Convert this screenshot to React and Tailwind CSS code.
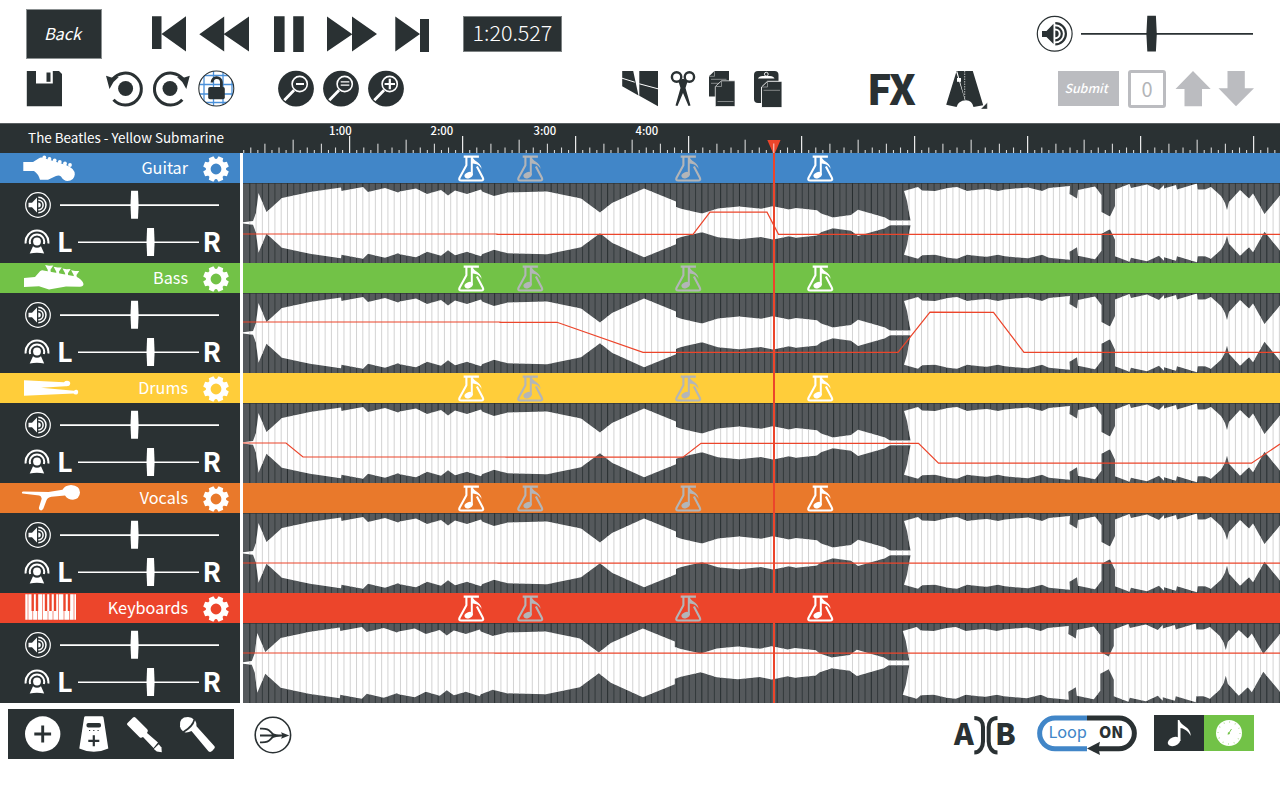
import React from "react";

const INK = "#2a3133";
const RED = "#ec452b";

const FONT = "font-['Noto_Sans_CJK_SC','Noto_Sans',sans-serif]";

function Icon({ box, className = "", children }) {
  const [x, y, w, h] = box;
  return (
    <svg className={`block shrink-0 ${className}`} width={w} height={h} viewBox={`${x} ${y} ${w} ${h}`} fill={INK}>
      {children}
    </svg>
  );
}

/* ---------- top bar ---------- */

function ZoomIcon({ className, kind }) {
  return (
    <Icon box={[278, 70, 36, 37]} className={className}>
      <circle cx="296" cy="88.6" r="17.9" />
      <path d="M284.3 100.3L294 90.2" stroke="#fff" strokeWidth="2.8" fill="none" />
      <circle cx="299.7" cy="84" r="7.6" fill={INK} stroke="#fff" strokeWidth="1.6" />
      {kind === "out" && <path d="M296 84h8" stroke="#fff" strokeWidth="2" />}
      {kind === "fit" && <path d="M295.7 81.8h8.6M295.7 85.2h8.6" stroke="#fff" strokeWidth="1.2" />}
      {kind === "in" && <path d="M294.6 84h10.4M299.8 78.8v10.4" stroke="#fff" strokeWidth="2.2" />}
    </Icon>
  );
}

function TopBar() {
  return (
    <header className="h-[123px] pt-[9px]">
      <div className="flex h-[50px] items-center pl-[26px]">
        <button className="h-[50px] w-[76px] border border-[#8b9091] bg-[#2a3133] pr-[3px] pb-[2px] text-[16.3px] leading-none text-white italic">Back</button>
        <Icon box={[152, 16, 35, 36]} className="ml-[50px]">
          <path d="M152 16.3h9.5v32.6H152zM161.5 34L186 16.3v35.2z" />
        </Icon>
        <Icon box={[199, 16, 51, 36]} className="ml-[12px]">
          <path d="M199.3 34.3L224.2 16.5v17.2L249 16.5v35L224.2 34.6v17z" />
        </Icon>
        <Icon box={[274, 16, 31, 36]} className="ml-[24px]">
          <path d="M274 16.3h10.6V52H274zM293.2 16.3h10.6V52h-10.6z" />
        </Icon>
        <Icon box={[327, 16, 51, 36]} className="ml-[22px]">
          <path d="M327 16.5L352 34V16.5L377 34 352 51.5V34.4L327 51.5z" />
        </Icon>
        <Icon box={[395, 16, 35, 36]} className="ml-[17px]">
          <path d="M395.3 16.5L420 34l-24.7 17.5zM420 19h9v33h-9z" />
        </Icon>
        <div className="ml-[33px] flex h-[36px] w-[99px] items-center justify-center border border-[#7d8283] bg-[#2a3133] pb-[4px] text-[21.5px] leading-none font-light text-white">
          <span>1:20.527</span>
        </div>
        <Icon box={[1036, 15, 38, 38]} className="ml-[474px]">
          <circle cx="1054.7" cy="33.8" r="17.4" fill="#fff" stroke={INK} strokeWidth="1.2" />
          <path d="M1042 31h4.5l7-7.3v20.3l-7-7h-4.5z" />
          <path d="M1055.3 30.4a3.4 3.4 0 0 1 0 6.8z" />
          <path d="M1055.3 27.3a6.5 6.5 0 0 1 0 13M1055.3 23.2a10.6 10.6 0 0 1 0 21.2" fill="none" stroke={INK} strokeWidth="2.2" />
        </Icon>
        <Icon box={[1081, 15, 173, 38]} className="ml-[7px]">
          <path d="M1081 32.9h172v1.9h-172z" />
          <path d="M1147.3 15.8h8.6q1.800 18 0 35.8h-8.600q-1.800-17.800 0-35.800z" />
        </Icon>
      </div>

      <div className="mt-[11px] flex h-[40px] items-start pl-[26px]">
        <Icon box={[26, 70, 37, 38]}>
          <path d="M26.800 71h32.200l3 3v32.300H26.800z" />
          <path d="M36 70.500h16.800v13H36z" fill="#fff" />
          <path d="M46.500 72.500h4v9.300h-4z" />
        </Icon>
        <Icon box={[105, 70, 39, 38]} className="ml-[42px]">
          <circle cx="125.600" cy="88.500" r="7.500" />
          <path d="M112.500 79.500A16 16 0 1 1 113.500 99.800" fill="none" stroke={INK} strokeWidth="3" />
          <path d="M106 75.800l5.500 1.800 7.300-.600-5.300 5-4 7z" />
        </Icon>
        <Icon box={[152, 70, 39, 38]} className="ml-[8px]">
          <circle cx="170" cy="88.500" r="7.500" />
          <path d="M183.300 79.500A16 16 0 1 0 182.300 99.800" fill="none" stroke={INK} strokeWidth="3" />
          <path d="M189.800 75.800l-5.500 1.800-7.300-.600 5.300 5 4 7z" />
        </Icon>
        <Icon box={[198, 70, 37, 38]} className="ml-[7px]">
          <clipPath id="lockClip"><circle cx="216.300" cy="88.500" r="17.600" /></clipPath>
          <g clipPath="url(#lockClip)" fill="none" stroke="#4a90d9" strokeWidth="1.300">
            <path d="M204 70v38M213.500 70v38M223 70v38M232 70v38M198 75.500h37M198 84.500h37M198 94h37M198 102.500h37" />
          </g>
          <circle cx="216.300" cy="88.500" r="17.500" fill="none" stroke={INK} strokeWidth="1.100" />
          <rect x="208.200" y="87" width="16.600" height="12.200" rx="1.800" />
          <path d="M212 82.500a4.700 4.700 0 0 1 9.400-.500v6" fill="none" stroke={INK} strokeWidth="2.800" />
        </Icon>
        <ZoomIcon kind="out" className="ml-[43px]" />
        <ZoomIcon kind="fit" className="ml-[9px]" />
        <ZoomIcon kind="in" className="ml-[9px]" />
        <Icon box={[622, 71, 37, 38]} className="ml-[218px]">
          <path d="M622.200 72h11l5.300 24.500L622.200 87.300zM639.300 72H658v35.300l-18.700-10.500z" />
          <path d="M622 79.200l12.800 4M639.300 84.800l18.700 5" stroke="#fff" strokeWidth="1" />
        </Icon>
        <Icon box={[670, 71, 27, 38]} className="ml-[11px]">
          <g fill="none" stroke={INK} strokeWidth="2.400">
            <circle cx="676.600" cy="78" r="4.700" />
            <circle cx="689.400" cy="78" r="4.700" />
          </g>
          <path d="M678.500 82.500l3.500-2.500h2l3.500 2.500-2 6.500 5 17.500-2 .500-5.500-13-5.500 13-2-.500 5-17.500z" />
        </Icon>
        <Icon box={[708, 71, 28, 38]} className="ml-[11px]">
          <path d="M714.500 72H729v25.500h-20V77.300z" />
          <path d="M714.500 72v5.300H709M711 80.300h15.500M711 84.300h10" fill="none" stroke="#9a9d9e" strokeWidth=".8" />
          <path d="M721.500 81.800H735V107.500h-19.700V87.500z" stroke="#fff" strokeWidth=".7" />
          <path d="M721.500 82v5.500H716M717.500 102.500h16" fill="none" stroke="#9a9d9e" strokeWidth=".8" />
        </Icon>
        <Icon box={[753, 70, 30, 39]} className="ml-[17px]">
          <rect x="754" y="71" width="24.500" height="32" rx="4" />
          <path d="M758 78.600q1-2.600 4.500-2.600h7.500q3.500 0 4.500 2.600z" fill="#fff" />
          <circle cx="766.300" cy="74.200" r="1.900" fill={INK} stroke="#fff" strokeWidth=".9" />
          <path d="M767.500 81.300H782v26.300h-20.500V87z" stroke="#fff" strokeWidth=".9" />
          <path d="M767.500 82v5H762M763.500 90.300h16.500" fill="none" stroke="#9a9d9e" strokeWidth=".8" />
        </Icon>
        <div className="-mt-[3px] ml-[84px] w-[49px] text-[41px] leading-[40px] font-black tracking-[-1.300px] text-[#2a3133]">FX</div>
        <Icon box={[946, 70, 42, 39]} className="ml-[30px]">
          <path d="M956.600 71h16.200L983.200 105.200l-9.700 1.800q-1.500-6.500-7.500-6.700-8 .500-9.400 6.700L946.200 104.800z" />
          <path d="M956.200 72l7.500 24 .800 3.500 1 .800-1.700-5-6.500-24z" fill="#fff" />
          <path d="M957 78h4v3.800h-4z" fill="#fff" />
          <path d="M964.700 71v28" stroke="#b4b7b7" strokeWidth="1" strokeDasharray="1.500 1" />
          <path d="M987.300 102.500v6.500h-6.500z" stroke="#fff" strokeWidth=".4" />
        </Icon>
        <button className="mt-px ml-[70px] h-[35px] w-[61px] bg-[#bbbcc0] pr-[5px] text-[12.400px] leading-none font-medium text-white italic">Submit</button>
        <div className="mt-0 ml-[9px] flex h-[38px] w-[38px] items-center justify-center rounded-[3px] border-[3px] border-[#bbbcc0] text-[20px] leading-none text-[#b3b5b8]">0</div>
        <Icon box={[1175, 70, 36, 38]} className="ml-[9px]">
          <path fill="#bbbcc0" d="M1193 71l17.700 18H1202v17.300h-17.500V89H1175.500z" />
        </Icon>
        <Icon box={[1218, 70, 37, 38]} className="ml-[7px]">
          <path fill="#bbbcc0" d="M1236 106.300l-17.500-18h9V71h17.300v17.300h9.200z" />
        </Icon>
      </div>
    </header>
  );
}

/* ---------- timeline ---------- */

const LANE_X = 243;
const LANE_W = 1037;

const UPPER = [
  [243, 222.3], [253, 221], [256, 213], [258.5, 193], [266.5, 212], [282, 198], [310, 192], [341, 187.5], [341.5, 191], [363, 187],
  [368, 192], [385, 188], [398, 192.5], [400, 191.5], [416, 188.5], [427, 194], [441, 190], [448, 195.5], [455, 190.5], [467, 194],
  [481, 189.5], [482, 191.5], [494, 196], [508, 192.5], [547, 191.5], [581, 198.5], [600, 212.5], [612, 203], [644, 188.5],
  [676, 201.5], [676, 207], [682, 209], [702, 213.5], [718, 208.5], [739, 206.5], [761, 208.8], [773, 206.3], [789, 209.5],
  [796, 208], [817, 210.3], [821, 213.5], [833, 217.5], [840, 216.5], [851, 215], [858, 209.7], [885, 217.5], [890, 220.5],
  [910.5, 220.5], [907, 201], [904, 191], [918, 187], [922, 190.5], [935, 191], [948, 188], [957, 187], [967, 191], [980, 189.5],
  [987, 189], [998, 191], [1005, 189.5], [1028, 187.5], [1042, 191], [1049, 188], [1070, 186], [1069.5, 194], [1077, 198.5],
  [1078, 190], [1095, 186.5], [1101.5, 195], [1101.5, 212], [1110, 216.5], [1115, 206], [1115, 189.5], [1129.5, 184], [1131, 188],
  [1147, 184.5], [1159, 190], [1164, 185], [1164, 188.5], [1176, 185], [1177, 189.5], [1197, 183.5], [1197.5, 189.5],
  [1205, 189.5], [1211, 187], [1221, 196], [1225, 203], [1227, 210], [1229, 202], [1240, 190], [1249, 198.5], [1253, 193.5],
  [1264.5, 214], [1282, 193],
].map(([x, y]) => [x, y - 183]);

const MIRROR = 79.8;
const WAVE = [...UPPER, ...UPPER.slice().reverse().map(([x, y]) => [x, MIRROR - y])]
  .map((p) => p.join(","))
  .join(" ");

const GRID = Array.from({ length: 165 }, (_, i) => 249.3 + i * 6.2778);

function Lane({ id, auto, shift = 0 }) {
  const clip = `wave-${id}`;
  return (
    <svg className="block" width={LANE_W} height="80" viewBox={`${LANE_X} 0 ${LANE_W} 80`}>
      <rect x={LANE_X} width={LANE_W} height="80" fill="#55595c" />
      {GRID.map((x, i) => (
        <rect key={i} x={x} width="1" height="80" fill="#22292b" opacity={i % 3 === 0 ? 0.9 : 0.65} />
      ))}
      <clipPath id={clip}>
        <polygon points={WAVE} transform={`translate(${shift} 0)`} />
      </clipPath>
      <polygon points={WAVE} fill="#fff" transform={`translate(${shift} 0)`} />
      <g clipPath={`url(#${clip})`}>
        {GRID.map((x, i) => (
          <rect key={i} x={x} width="1" height="80" fill="#d3d3d3" />
        ))}
      </g>
      <rect x={LANE_X} width={LANE_W} height=".6" fill="#2a3133" />
      <polyline points={auto} fill="none" stroke={RED} strokeWidth="1.2" />
    </svg>
  );
}

const MARKERS = [
  { left: "left-[215px]", color: "#ffffff" },
  { left: "left-[274px]", color: "#b3b5b8" },
  { left: "left-[432px]", color: "#b3b5b8" },
  { left: "left-[564px]", color: "#ffffff" },
];

function Flask({ color }) {
  return (
    <svg className="block" width="27" height="28" viewBox="458.300 154 27 28">
      <path
        d="M464 156.600h15.200M466.700 157v8.300l-6.700 12.200q-1.400 3 1.500 3h20q3 0 1.500-3l-5.800-11"
        fill="none" stroke={color} strokeWidth="2.100" strokeLinejoin="round"
      />
      <ellipse cx="468.900" cy="175.200" rx="4.300" ry="3" transform="rotate(-22 468.900 175.200)" fill={color} />
      <path d="M471.100 175v-18h2c.500 4.500 8.500 4.800 8.800 12-2-4.300-5.500-5-8.800-5.500V175z" fill={color} />
    </svg>
  );
}

function tickTop(i) {
  if (i % 16 === 0) return 13;
  if (i % 8 === 0) return 16.7;
  if (i % 4 === 0) return 20.7;
  if (i % 2 === 0) return 24.5;
  return 27;
}

function Ruler() {
  return (
    <div className="relative h-[30px] flex-1 border-t border-[#5a5f61] bg-[#2a3133] text-[11.300px] leading-none font-medium text-white">
      <svg className="-mt-px block" width="1040" height="30" viewBox="240 0 1040 30">
        {Array.from({ length: 147 }, (_, k) => k + 1).map((i) => (
          <rect key={i} x={236.100 + i * 7.0625} y={tickTop(i)} width="1.100" height={30 - tickTop(i)} fill="#fff" opacity={i % 16 === 0 ? 1 : 0.8} />
        ))}
      </svg>
      <span className="absolute top-[.5px] left-[89px]">1:00</span>
      <span className="absolute top-[.5px] left-[190.500px]">2:00</span>
      <span className="absolute top-[.5px] left-[293.500px]">3:00</span>
      <span className="absolute top-[.5px] left-[395.500px]">4:00</span>
    </div>
  );
}

/* ---------- track panel ---------- */

function Gear() {
  return (
    <svg className="block" width="28" height="28" viewBox="-14 -14 28 28">
      <circle r="7.800" fill="none" stroke="#fff" strokeWidth="4.800" />
      {[22.5, 67.5, 112.5, 157.5, 202.5, 247.5, 292.5, 337.5].map((a) => (
        <path key={a} d="M-3.200 -9h6.400l-.700 -3.800h-5z" transform={`rotate(${a})`} fill="#fff" />
      ))}
    </svg>
  );
}

const GLYPHS = {
  guitar: (
    <g>
      <path d="M23.300 162H33L39 158.200Q40.500 157 43 157.800L66 165Q75 168.500 74.800 174.500 74 181 67.500 181 63.500 180.800 61 176.500 59 174.800 56 176L48 179.800H40Q38.500 174 34 171H23.300z" />
      {[[44.3, 157.4], [49.5, 158.900], [54.700, 160.400], [59.800, 162], [65, 163.500], [70, 165]].map(([x, y]) => (
        <circle key={x} cx={x} cy={y} r="1.900" />
      ))}
    </g>
  ),
  bass: (
    <g>
      <path d="M24 278L35 277L40 271.300Q41.500 270 43.500 270.400L76 276.500Q82 279 83.500 284 83.300 286.800 80 286.800L66 286.500 49 289.500 39 286.300 24 287z" />
      {[[49.300, 265], [57.800, 266.800], [66.700, 268.500], [75.300, 270.300]].map(([x, y]) => (
        <path key={x} d={`M${x - 4.200} ${y}l4 .8 4.200-.2-2.800 4.200.4 4h-3l-.2-4z`} />
      ))}
    </g>
  ),
  drums: (
    <path d="M24 380.300L64 382.300q1.200-1.700 4-1.400 2.500.500 2.200 2.900-.500 3-5 2.400L41 387.700l33 3q2.500-1.800 4 .1.800 3.300-1.800 3.800-2 .1-2.700-1L24 395.800z" />
  ),
  vocals: (
    <path d="M22.300 493.600q-1.200-1.800 1.200-2l25 .400 14-2.300q2.500-4.300 8.500-4.700 9 .500 9 7.500-.500 6.500-7 7.300-5 0-8-4.300l-13.500 1.300q-4 .500-5 3.500L43.500 508.300q-1 2.500-3 2t-1.500-3l2.700-8.500q-.200-2.800-2.500-3.300z" />
  ),
  keyboards: (
    <g>
      <path d="M25.300 594.300H76v25.400H25.300z" />
      <path d="M32.700 594v17M37 594v17M46 594v17M50.500 594v17M55 594v17M64.500 594v17M69 594v17" stroke="#ec452b" strokeWidth="2.400" />
      <path d="M32.700 611v9M37.500 611v9M42.500 594v26M48 611v9M53 611v9M58.500 594v26M64 611v9M69.500 611v9M74 594v26M28 594v26" stroke="#ec452b" strokeWidth=".6" />
    </g>
  ),
};

function TrackControls() {
  return (
    <div className="flex h-[80px] flex-col bg-[#2a3133] pt-[7px]">
      <div className="flex h-[29px] items-center pl-[24px]">
        <Icon box={[24, 191, 28, 28]}>
          <g fill="#fff">
            <circle cx="38" cy="205" r="12.300" fill="none" stroke="#fff" strokeWidth="1.200" />
            <path d="M28.500 202.800h3.500l5-5.300v15l-5-5.300h-3.500z" />
            <path d="M38.300 202.500a2.500 2.500 0 0 1 0 5z" />
            <path d="M38.300 200.200a4.800 4.800 0 0 1 0 9.600M38.300 197.300a7.700 7.700 0 0 1 0 15.400" fill="none" stroke="#fff" strokeWidth="1.500" />
          </g>
        </Icon>
        <Icon box={[60, 190, 160, 29]} className="ml-[8px]">
          <path d="M59.800 204.200H219v1.700H59.800z" fill="#fff" />
          <path d="M131.100 190.800h6.900q1.200 14 0 28h-6.900q-1.200-14 0-28z" fill="#fff" />
        </Icon>
      </div>
      <div className="mt-[7px] flex h-[30px] items-center pl-[24px] text-white">
        <Icon box={[24, 227, 27, 28]}>
          <g fill="#fff">
            <circle cx="37" cy="241.500" r="3.900" />
            <path d="M33 246.300q4 3 8 0l3.200 7.200q-7.200-1.600-14.500 0z" />
            <path d="M30.200 244A7.200 7.200 0 1 1 43.800 244M25.700 243.500A11.400 11.400 0 1 1 48.300 243.500" fill="none" stroke="#fff" strokeWidth="2" />
          </g>
        </Icon>
        <span className="-mt-px ml-[6px] w-[21px] text-[27px] leading-[30px] font-bold">L</span>
        <Icon box={[78, 227, 121, 29]}>
          <path d="M78 241.400h121v1.700H78z" fill="#fff" />
          <path d="M147.100 228h6.900q1.200 14 0 28h-6.900q-1.200-14 0-28z" fill="#fff" />
        </Icon>
        <span className="-mt-px ml-[3.500px] text-[27px] leading-[30px] font-bold">R</span>
      </div>
    </div>
  );
}

const TRACKS = [
  { id: "guitar", name: "Guitar", bg: "bg-[#4186c8]", box: [20, 153, 66, 30], auto: "243,51 497,51 497,51.4 693,51.4 710,29.2 767,29.2 778.5,51.4 1280,51.4" },
  { id: "bass", name: "Bass", bg: "bg-[#72c247]", box: [20, 263, 66, 30], auto: "243,29 500,29 500,29.3 557,29.3 643,59.3 898,59.3 930,19.2 993.5,19.4 1024,59.4 1280,59.4" },
  { id: "drums", name: "Drums", bg: "bg-[#ffcd3a]", box: [20, 373, 66, 30], auto: "243,40 286,40 303,54 506,54 506,54.2 683,54.2 701,40.300 918.5,40.400 938.5,60.2 1251.5,60.2 1280,41" },
  { id: "vocals", name: "Vocals", bg: "bg-[#e9792b]", box: [20, 483, 66, 30], auto: "243,50 498,50 498,50.2 1280,50.2" },
  { id: "keyboards", name: "Keyboards", bg: "bg-[#ec452b]", box: [20, 593, 66, 30], auto: "243,30 495,30 495,30.2 1280,30.2", shift: -1.2 },
];

function Track({ track }) {
  return (
    <div className="flex h-[110px]">
      <div className="w-[240px] shrink-0">
        <div className={`flex h-[30px] items-center pl-[20px] ${track.bg}`}>
          <Icon box={track.box}>
            <g fill="#fff">{GLYPHS[track.id]}</g>
          </Icon>
          <span className="-mt-[2px] flex-1 text-right text-[16.200px] leading-[30px] text-white">{track.name}</span>
          <div className="mt-[2px] mr-[10px] ml-[14px]"><Gear /></div>
        </div>
        <TrackControls />
      </div>
      <div className="w-[3px] shrink-0 bg-white" />
      <div className="flex-1">
        <div className={`relative h-[30px] ${track.bg}`}>
          {MARKERS.map((m) => (
            <div key={m.left} className={`absolute top-px ${m.left}`}><Flask color={m.color} /></div>
          ))}
        </div>
        <Lane id={track.id} auto={track.auto} shift={track.shift} />
      </div>
    </div>
  );
}

/* ---------- bottom bar ---------- */

function BottomBar() {
  return (
    <footer className="flex items-start pt-[6px] pl-[8px]">
      <div className="flex h-[50px] w-[226px] items-center bg-[#2a3133] pl-[16px]">
        <Icon box={[24, 715, 38, 38]}>
          <circle cx="42.700" cy="734" r="17.700" fill="#fff" />
          <path d="M34.300 734h16.800M42.700 725.600v16.800" stroke={INK} strokeWidth="2.900" />
        </Icon>
        <Icon box={[78, 715, 32, 38]} className="ml-[16px]">
          <path d="M85.500 716.300h16.500q1.200 0 1.500 1.200l4.800 31q-7 3.300-14.500 3.300t-14.500-3.300l4.800-31q.300-1.200 1.400-1.200z" fill="#fff" />
          <rect x="86.500" y="723" width="14.500" height="4.500" rx="1.800" />
          <path d="M89 730.500h1.200M93.200 730.500h1.200M97.500 730.500h1.200" stroke={INK} strokeWidth="1.200" />
          <path d="M88.300 740.800h11M93.800 735.300v11" stroke={INK} strokeWidth="2.200" />
        </Icon>
        <Icon box={[126, 715, 38, 38]} className="ml-[16px]">
          <g fill="#fff">
            <path d="M127.500 723l5.500-5.500q1.300-1.200 2.700.300l11.500 11.500q1 1.200.500 2.300l-.700 1.300 11 9.500-4.500 5.500-10.500-11-1.200.700q-1 .700-2.200-.400L127.400 725q-1-1 .100-2z" />
            <path d="M158.700 744.300l2.800 3.200.300 4.800-5-.700-3-2.500z" />
          </g>
        </Icon>
        <Icon box={[178, 715, 38, 38]} className="ml-[14px]">
          <g fill="#fff">
            <path d="M180 726.500q-1.300-9.500 8-9.500 4 .200 5.500 2.300-1 6-10.500 12-2.500-1.600-3-4.800z" />
            <path d="M195 720.300q2 3 1.500 6l18 20q.700 1 0 2-2 3-4.300 3.700-1 0-1.800-.700L191.500 731q-3.500 2-7 1.300 9-5.300 10.500-12z" />
          </g>
        </Icon>
      </div>
      <Icon box={[254, 715, 39, 40]} className="mt-[6px] ml-[20px]">
        <g fill="none" stroke={INK} strokeWidth="1.800">
          <circle cx="272.900" cy="735" r="17.700" strokeWidth="1.600" />
          <path d="M260 735.500h25M260 728.700c9-.500 9 2 12.500 5 2.500 1.800 5 1.800 9 1.800M260 742.300c9 .500 9-2 12.500-5 2.500-1.800 5-1.800 9-1.800" />
        </g>
        <path d="M281 732.300l8.300 3.200-8.300 3.200 1.500-3.200z" />
      </Icon>
      <div className="mt-[5px] ml-[661px] flex h-[42px] w-[64px] items-center text-[30px] leading-[40px] font-black text-[#2a3133]">
        <span className="-mt-[6px] w-[19px]">A</span>
        <Icon box={[973, 714, 26, 41]}>
          <path d="M974.300 717c6.500 0 8.700 5 8.700 9v14.500c0 5-2.700 11-8.700 11M997.500 717c-6.500 0-8.800 5-8.800 9v14.500c0 5 2.800 11 8.800 11" fill="none" stroke={INK} strokeWidth="4" />
        </Icon>
        <span className="-mt-[6px] -ml-[4px]">B</span>
      </div>
      <div className="relative ml-[18px] h-[50px] w-[102px]">
        <Icon box={[1036, 709, 102, 50]}>
          <path d="M1087 718h-32a15.200 15.200 0 0 0 0 30.700h32" fill="none" stroke="#4186c8" strokeWidth="5" />
          <path d="M1087 718h32a15.200 15.200 0 0 1 0 30.700h-26" fill="none" stroke={INK} strokeWidth="5" />
          <path d="M1087 748.500l13-6.800-1.500 6.800 1.500 6.500z" />
        </Icon>
        <span className="absolute top-[12px] left-[12.500px] text-[16.300px] leading-[20px] text-[#4186c8]">Loop</span>
        <span className="absolute top-[13px] left-[63px] text-[15.700px] leading-[20px] font-black text-[#2a3133]">ON</span>
      </div>
      <div className="mt-[6px] ml-[16px] flex">
        <div className="h-[36px] w-[50px] bg-[#2a3133]">
          <Icon box={[1154, 715, 50, 36]}>
            <ellipse cx="1174" cy="741.500" rx="6.500" ry="4.300" transform="rotate(-22 1174 741.500)" fill="#fff" />
            <path d="M1177.800 740.500V720h1.500c1.500 6 11.300 6.500 11.500 16-3-6-7.500-7.500-10.300-8V741z" fill="#fff" />
          </Icon>
        </div>
        <div className="h-[36px] w-[50px] bg-[#72c247]">
          <Icon box={[1204, 715, 50, 36]}>
            <circle cx="1229" cy="733" r="13" fill="#fff" />
            <circle cx="1229" cy="733" r="11" fill="none" stroke="#a6d889" strokeWidth="1.300" strokeDasharray=".8 4.960" />
            <path d="M1228 734.500l3.500-5.500" stroke="#72c247" strokeWidth=".9" />
            <circle cx="1228.800" cy="733.300" r="1.100" fill="#72c247" />
          </Icon>
        </div>
      </div>
    </footer>
  );
}

export default function App() {
  return (
    <div className={`h-[800px] w-[1280px] overflow-hidden bg-white ${FONT}`}>
      <TopBar />
      <main className="relative">
        <div className="flex h-[30px]">
          <div className="h-[30px] w-[240px] border-t border-[#5a5f61] bg-[#2a3133] pr-[16px] text-right text-[13.450px] leading-[27px] whitespace-nowrap text-white">
            The Beatles - Yellow Submarine
          </div>
          <Ruler />
        </div>
        {TRACKS.map((t) => (
          <Track key={t.id} track={t} />
        ))}
        <div className="absolute top-[17px] left-[767px]">
          <svg className="block" width="14" height="563" viewBox="767 140 14 563">
            <path d="M767.300 140h13.200l-5.500 13v550h-2V153z" fill={RED} />
            <path d="M773.800 143.500v9.500" stroke="#fff" strokeWidth="1" opacity=".8" />
          </svg>
        </div>
      </main>
      <BottomBar />
    </div>
  );
}
